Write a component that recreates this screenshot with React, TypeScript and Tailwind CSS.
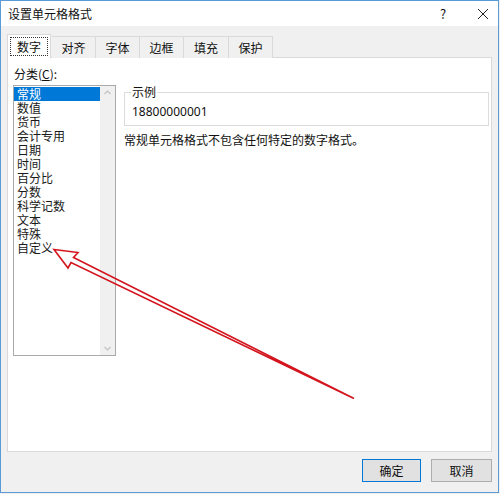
import React from "react";

const CATEGORIES = [
  "常规",
  "数值",
  "货币",
  "会计专用",
  "日期",
  "时间",
  "百分比",
  "分数",
  "科学记数",
  "文本",
  "特殊",
  "自定义",
];

const TABS = [
  { label: "数字", w: "w-[44px]" },
  { label: "对齐", w: "w-[44px]" },
  { label: "字体", w: "w-[44px]" },
  { label: "边框", w: "w-[44px]" },
  { label: "填充", w: "w-[45px]" },
  { label: "保护", w: "w-[44px]" },
];

const font = "font-['Segoe_UI','Noto_Sans_CJK_SC','Noto_Sans',sans-serif]";

function CategoryList() {
  return (
    <div className="flex w-[103px] h-[271px] border border-[#aaaaaa] bg-white">
      <ul className="flex-1 pt-[1px]">
        {CATEGORIES.map((c, i) => (
          <li
            key={c}
            className={
              "h-[14px] leading-[14px] pl-[3px] text-[12px] " +
              (i === 0 ? "bg-[#0078d7] text-white" : "text-[#1a1a1a]")
            }
          >
            {c}
          </li>
        ))}
      </ul>
      {/* vertical scrollbar, disabled look */}
      <div className="w-[15px] bg-[#f0f0f0] flex flex-col justify-between items-center py-[2px]">
        <svg width="9" height="9" viewBox="0 0 9 9">
          <path d="M1.5 6 L4.5 3 L7.5 6" fill="none" stroke="#c2c2c2" strokeWidth="1.2" />
        </svg>
        <svg width="9" height="9" viewBox="0 0 9 9">
          <path d="M1.5 3 L4.5 6 L7.5 3" fill="none" stroke="#c2c2c2" strokeWidth="1.2" />
        </svg>
      </div>
    </div>
  );
}

function Tabs() {
  return (
    <div className="flex items-end h-[24px] relative z-10">
      {TABS.map((t, i) =>
        i === 0 ? (
          <div
            key={t.label}
            className={`${t.w} h-[24px] bg-white border border-b-0 border-[#d9d9d9] flex items-center justify-center p-[2px]`}
          >
            <div className="w-full h-full border border-dotted border-[#333] flex items-center justify-center text-[12px] text-[#111]">
              {t.label}
            </div>
          </div>
        ) : (
          <div
            key={t.label}
            className={`${t.w} h-[22px] bg-[#f0f0f0] border border-[#d9d9d9] border-l-0 border-b-0 flex items-center justify-center text-[12px] text-[#111] ${i === 1 ? "ml-px border-l" : ""}`}
          >
            {t.label}
          </div>
        )
      )}
    </div>
  );
}

function Arrow() {
  return (
    <svg
      className="absolute left-0 top-0 pointer-events-none"
      width="500"
      height="494"
      viewBox="0 0 500 494"
    >
      <polygon
        points="54,249.5 78,252.5 73.5,257.5 354,398.5 71,262.5 68,268"
        fill="none"
        stroke="#d3141c"
        strokeWidth="1.6"
        strokeLinejoin="miter"
      />
    </svg>
  );
}

export default function App() {
  return (
    <div className={`relative w-[500px] h-[494px] bg-[#f0f0f0] ${font}`}>
      <div className="w-[499px] h-[493px] border border-[#5b9bd5] flex flex-col">
        {/* title bar */}
        <div className="h-[25px] bg-white flex items-center pl-[7px] pr-[8px] text-[12px] text-[#111]">
          <span className="flex-1">设置单元格格式</span>
          <span className="w-[20px] text-center text-[13px] mr-[24px]">?</span>
          <svg width="12" height="12" viewBox="0 0 12 12" className="mr-[1px]">
            <path d="M1 1 L11 11 M11 1 L1 11" stroke="#222" strokeWidth="1" />
          </svg>
        </div>

        <div className="flex-1 flex flex-col px-[6px] pt-[8px]">
          <Tabs />
          <div className="h-[395px] -mt-px bg-white border border-[#d9d9d9] flex gap-[8px] pl-[5px] pr-[2px] pt-[9px]">
            <div className="flex flex-col">
              <div className="text-[12px] leading-[14px] text-[#111] pl-px mb-[4px]">
                分类(<span className="underline">C</span>):
              </div>
              <CategoryList />
            </div>

            <div className="flex-1 flex flex-col pt-[18px]">
              <fieldset className="border border-[#dcdcdc] h-[41px] px-[7px]">
                <legend className="text-[12px] leading-[14px] text-[#111] px-[1px] ml-[-1px]">示例</legend>
                <div className="text-[12px] text-[#111] font-['Noto_Sans',sans-serif] leading-[16px] pt-[5px]">
                  18800000001
                </div>
              </fieldset>
              <div className="text-[12px] leading-[14px] text-[#111] mt-[7px]">
                常规单元格格式不包含任何特定的数字格式。
              </div>
            </div>
          </div>

          {/* footer buttons */}
          <div className="flex justify-end gap-[10px] pt-[7px]">
            <button className="w-[59px] h-[23px] bg-[#e1e1e1] border border-[#0078d7] text-[12px] text-[#111]">
              确定
            </button>
            <button className="w-[61px] h-[23px] bg-[#e1e1e1] border border-[#adadad] text-[12px] text-[#111]">
              取消
            </button>
          </div>
        </div>
      </div>
      <Arrow />
    </div>
  );
}
